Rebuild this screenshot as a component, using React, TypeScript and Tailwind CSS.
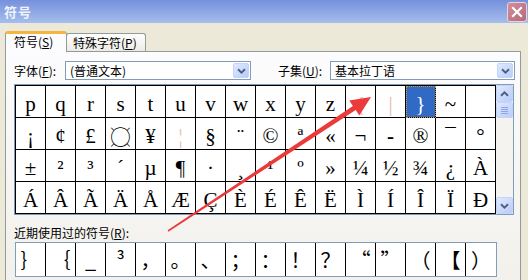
import React from "react";

const rows: string[][] = [
  ["p", "q", "r", "s", "t", "u", "v", "w", "x", "y", "z", "{", "|", "}", "~", ""],
  ["¡", "¢", "£", "¤", "¥", "¦", "§", "¨", "©", "ª", "«", "¬", "-", "®", "¯", "°"],
  ["±", "²", "³", "´", "µ", "¶", "·", "¸", "¹", "º", "»", "¼", "½", "¾", "¿", "À"],
  ["Á", "Â", "Ã", "Ä", "Å", "Æ", "Ç", "È", "É", "Ê", "Ë", "Ì", "Í", "Î", "Ï", "Ð"],
];

const recent = ["｝", "｛", "_", "³", "，", "。", "、", "；", "：", "！", "？", "“", "”", "（", "【", "）"];

const Chevron = ({ up = false }: { up?: boolean }) => (
  <svg width="9" height="6" viewBox="0 0 9 6" className={up ? "rotate-180" : ""}>
    <path d="M1 1.2 L4.5 4.6 L8 1.2" fill="none" stroke="#4D6185" strokeWidth="2" />
  </svg>
);

const XpButton = ({ children, className = "" }: { children?: React.ReactNode; className?: string }) => (
  <div
    className={`flex items-center justify-center rounded-[2px] border border-[#C3D3FD] bg-linear-to-br from-[#E1EAFE] to-[#B9CCF7] ${className}`}
  >
    {children}
  </div>
);

const Key = ({ k }: { k: string }) => (
  <>
    (<span className="underline">{k}</span>)
  </>
);

const Dropdown = ({ text, width }: { text: string; width: string }) => (
  <div className={`${width} h-[19px] border border-[#7F9DB9] bg-white flex items-center justify-between pl-[4px] pr-[1px]`}>
    <span className="leading-[17px]">{text}</span>
    <XpButton className="w-[16px] h-[15px]">
      <Chevron />
    </XpButton>
  </div>
);

export default function App() {
  return (
    <div className="relative w-[528px] h-[280px] overflow-hidden bg-[#ECE9D8] text-[12px] text-black font-['Noto_Sans_CJK_SC',sans-serif]">
      {/* title bar */}
      <div className="h-[23px] flex items-center justify-between pl-[4px] pr-[1px] bg-linear-to-b from-[#7690DC] to-[#A6BEED]">
        <span className="text-[13px] font-bold text-[#EEF3FC] tracking-[1px]">符号</span>
        <div className="w-[20px] h-[20px] rounded-[3px] border border-[#E9D3D8] bg-linear-to-br from-[#D28E9A] to-[#B66A79] flex items-center justify-center">
          <svg width="12" height="12" viewBox="0 0 12 12">
            <path d="M2 2 L10 10 M10 2 L2 10" stroke="white" strokeWidth="2.2" strokeLinecap="square" />
          </svg>
        </div>
      </div>

      <div className="pt-[7px] pl-[5px]">
        {/* tabs */}
        <div className="flex items-end h-[21px]">
          <div className="relative z-10 -mb-px w-[62px] h-[21px] border border-b-0 border-[#919B9C] border-t-[3px] border-t-[#F5B63F] rounded-t-[3px] bg-[#FCFCFE] pl-[8px] leading-[16px]">
            符号<Key k="S" />
          </div>
          <div className="-ml-px w-[80px] h-[18px] border border-b-0 border-[#919B9C] rounded-t-[3px] bg-linear-to-b from-[#FEFEFE] to-[#ECEBE5] pl-[6px] leading-[17px]">
            特殊字符<Key k="P" />
          </div>
        </div>

        {/* panel */}
        <div className="w-[516px] h-[240px] border border-[#919B9C] bg-linear-to-b from-[#FCFCFE] to-[#F1F0EA] pl-[8px] pt-[9px]">
          <div className="flex items-center h-[19px]">
            <span className="w-[51px]">
              字体<Key k="F" />:
            </span>
            <Dropdown text="(普通文本)" width="w-[186px]" />
            <span className="ml-[27px] w-[52px]">
              子集<Key k="U" />:
            </span>
            <Dropdown text="基本拉丁语" width="w-[185px]" />
          </div>

          {/* character grid */}
          <div className="mt-[4px] w-[500px] border border-[#7F9DB9] flex bg-white">
            <div className="grid grid-cols-[repeat(16,30px)] border-l border-t border-black font-['Liberation_Serif',serif] text-[21px]">
              {rows.flatMap((row, r) =>
                row.map((ch, c) => {
                  const selected = r === 0 && c === 13;
                  const faint = (r === 0 && (c === 11 || c === 12)) || (r === 1 && c === 5);
                  return (
                    <div
                      key={`${r}-${c}`}
                      className={`h-[32px] border-r border-b border-black flex justify-center pt-[4px] leading-[28px] ${
                        selected
                          ? "bg-[#316AC5] text-white outline-1 outline-dotted outline-[#D99A2B] -outline-offset-1"
                          : faint
                          ? "text-[#E7B9A6]"
                          : ""
                      } ${r === 1 && c === 12 ? "font-bold" : ""}`}
                    >
                      {r === 1 && c === 3 ? (
                        <span className="font-['Inter',sans-serif] font-thin text-[33px] leading-[26px]">{ch}</span>
                      ) : (
                        ch
                      )}
                    </div>
                  );
                })
              )}
            </div>
            {/* scrollbar */}
            <div className="w-[17px] flex flex-col bg-[#F4F3EF]">
              <XpButton className="h-[17px]">
                <Chevron up />
              </XpButton>
              <XpButton className="h-[16px] flex-col gap-[1px]">
                <div className="w-[7px] h-px bg-[#8CA5E6]" />
                <div className="w-[7px] h-px bg-[#8CA5E6]" />
                <div className="w-[7px] h-px bg-[#8CA5E6]" />
                <div className="w-[7px] h-px bg-[#8CA5E6]" />
              </XpButton>
              <div className="flex-1" />
              <XpButton className="h-[17px]">
                <Chevron />
              </XpButton>
            </div>
          </div>

          <div className="mt-[11px] leading-[14px]">
            近期使用过的符号<Key k="R" />:
          </div>

          {/* recently used */}
          <div className="mt-[2px] ml-px w-[482px] h-[35px] border border-[#7F9DB9] bg-white flex text-[20px]">
            {recent.map((ch, i) => (
              <div
                key={i}
                className={`w-[30px] shrink-0 h-full flex items-center justify-center ${i < 15 ? "border-r border-black" : ""}`}
              >
                {ch}
              </div>
            ))}
          </div>
        </div>
      </div>

      {/* red annotation arrow */}
      <svg className="absolute inset-0 pointer-events-none" width="528" height="280">
        <polygon
          points="167.6,230.3 352.9,105.9 349.3,100.5 371,97 359.3,115.5 355.7,110.1 168.4,231.7"
          fill="#EC3A3A"
        />
      </svg>
    </div>
  );
}
